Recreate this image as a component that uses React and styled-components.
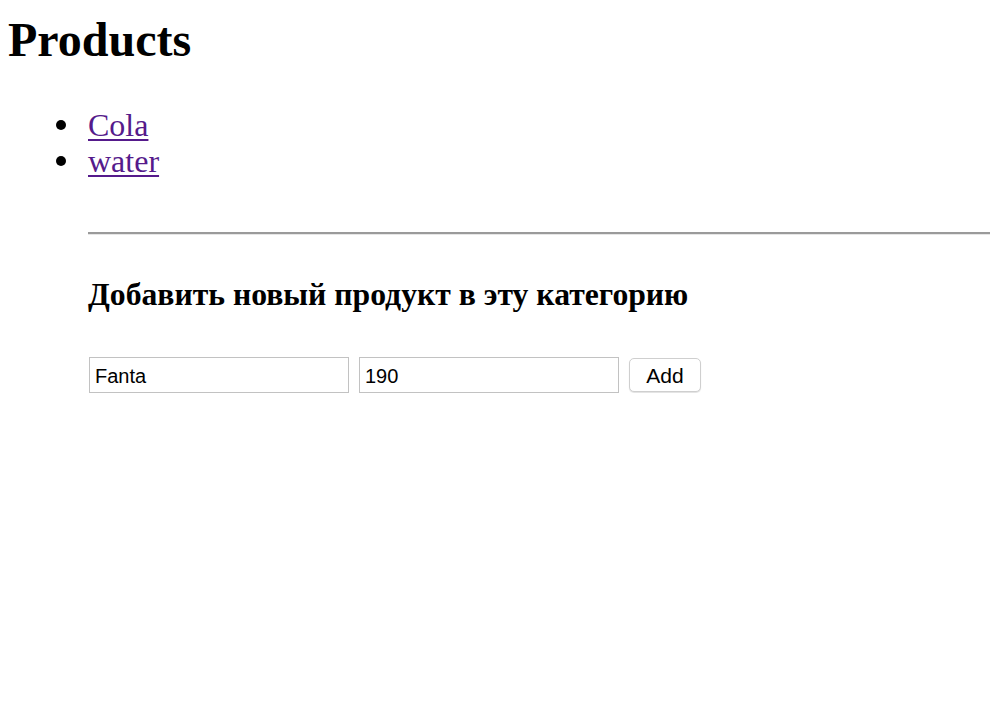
import React from 'react'
import styled, { createGlobalStyle } from 'styled-components'

const GlobalStyle = createGlobalStyle`
  body {
    margin: 0;
    background: #fff;
    color: #000;
    font-family: "Liberation Serif", "Times New Roman", serif;
  }
`

const Page = styled.div`
  padding: 12px 0 0 8px;
`

const Title = styled.h1`
  margin: 0;
  font-size: 48px;
  line-height: 56px;
  font-weight: 700;
`

const ProductList = styled.ul`
  list-style: none;
  margin: 39px 0 0;
  padding: 0 0 0 48px;
`

const ProductItem = styled.li`
  display: flex;
  align-items: center;
  gap: 22px;
  font-size: 32px;
  line-height: 36px;

  &::before {
    content: '';
    width: 10px;
    height: 10px;
    border-radius: 50%;
    background: #000;
  }
`

const ProductLink = styled.a`
  color: #551a8b;
  text-decoration: underline;
  text-decoration-thickness: 2px;
  text-underline-offset: 3px;
`

const AddSection = styled.section`
  margin: 53px 0 0 80px;
`

const Divider = styled.hr`
  margin: 0;
  height: 0;
  border: none;
  border-top: 2px solid #9a9a9a;
  border-bottom: 1px solid #e6e6e6;
`

const SectionTitle = styled.h3`
  margin: 42px 0 0;
  font-size: 31.7px;
  line-height: 36px;
  font-weight: 700;
`

const Form = styled.form`
  display: flex;
  align-items: center;
  gap: 10px;
  margin-top: 44px;
  padding-left: 1px;
`

const Field = styled.input`
  box-sizing: border-box;
  width: 260px;
  height: 36px;
  margin: 0;
  padding: 2px 5px 0;
  border: 1px solid #c2c2c2;
  border-radius: 0;
  font-family: "Liberation Sans", Arial, sans-serif;
  font-size: 20px;
  color: #000;
  outline: none;
`

const AddButton = styled.button`
  box-sizing: border-box;
  width: 72px;
  height: 34px;
  margin: 0;
  padding: 1px 0 0;
  background: #fff;
  border: 1px solid #cfcfcf;
  border-radius: 5px;
  box-shadow: 0 1px 1px rgba(0, 0, 0, 0.12);
  font-family: "Liberation Sans", Arial, sans-serif;
  font-size: 21px;
  color: #000;
`

const products = ['Cola', 'water']

export default function App() {
  return (
    <Page>
      <GlobalStyle />
      <Title>Products</Title>
      <ProductList>
        {products.map((name) => (
          <ProductItem key={name}>
            <ProductLink href="#">{name}</ProductLink>
          </ProductItem>
        ))}
      </ProductList>
      <AddSection>
        <Divider />
        <SectionTitle>Добавить новый продукт в эту категорию</SectionTitle>
        <Form onSubmit={(e) => e.preventDefault()}>
          <Field defaultValue="Fanta" />
          <Field defaultValue="190" />
          <AddButton type="submit">Add</AddButton>
        </Form>
      </AddSection>
    </Page>
  )
}
